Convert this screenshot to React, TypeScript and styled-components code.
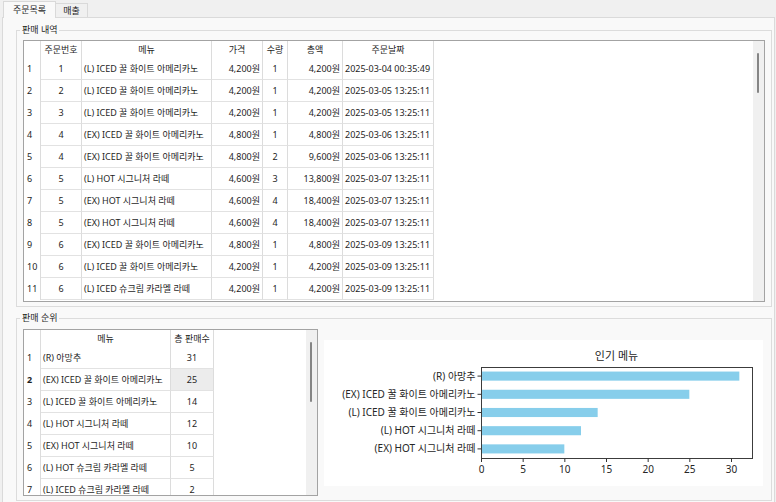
import React from "react";
import styled, { createGlobalStyle } from "styled-components";

const GlobalStyle = createGlobalStyle`
  html, body { margin: 0; padding: 0; background: #f0f0f0; }
  body {
    font-family: "Noto Sans", "Noto Sans CJK KR", sans-serif;
    color: #1e1e1e;
  }
  * { box-sizing: border-box; }
`;

const Window = styled.div`
  width: 776px;
  height: 502px;
  overflow: hidden;
  background: #f0f0f0;
  display: flex;
  flex-direction: column;
  font-size: 9px;
`;

const TabStrip = styled.div`
  height: 17px;
  flex: none;
  display: flex;
  align-items: flex-end;
  padding-left: 3px;
`;

const Tab = styled.div<{ $active?: boolean }>`
  position: relative;
  z-index: ${(p) => (p.$active ? 1 : 0)};
  height: ${(p) => (p.$active ? 17 : 14)}px;
  margin-bottom: ${(p) => (p.$active ? -1 : 0)}px;
  padding: 0 ${(p) => (p.$active ? 9 : 7)}px;
  display: flex;
  align-items: center;
  background: ${(p) => (p.$active ? "#f9f9f9" : "#f0f0f0")};
  border: 1px solid #d9d9d9;
  border-bottom: none;
  margin-left: ${(p) => (p.$active ? 0 : -1)}px;
  line-height: 12px;
  white-space: nowrap;
`;

const TabPage = styled.div`
  flex: 1;
  margin: 0 1px 0 2px;
  background: #f9f9f9;
  border: 1px solid #dadada;
  border-bottom: none;
  padding: 6px 2px 0 13px;
  display: flex;
  flex-direction: column;
  gap: 5px;
`;

const GroupBox = styled.fieldset<{ $height: number; $padTop: number }>`
  margin: 0;
  min-width: 0;
  height: ${(p) => p.$height}px;
  flex: none;
  border: 1px solid #dcdcdc;
  padding: ${(p) => p.$padTop}px 6px 4px 6px;
`;

const Legend = styled.legend`
  margin-left: -3px;
  padding: 0 2px;
  font-size: 9px;
  line-height: 12px;
  color: #1e1e1e;
`;

const GroupRow = styled.div`
  display: flex;
  align-items: center;
  gap: 6px;
`;

const GridFrame = styled.div<{ $width?: number; $height: number }>`
  flex: none;
  width: ${(p) => (p.$width ? `${p.$width}px` : "100%")};
  height: ${(p) => p.$height}px;
  display: flex;
  border: 1px solid #a3a3a3;
  background: #ffffff;
  overflow: hidden;
`;

const GridBody = styled.div`
  flex: 1;
  overflow: hidden;
`;

const ScrollTrack = styled.div`
  flex: none;
  width: 11px;
  background: #f0f0f0;
  padding: 12px 0 0 4px;
`;

const ScrollThumb = styled.div<{ $height: number }>`
  width: 2px;
  height: ${(p) => p.$height}px;
  background: #858585;
  border-radius: 1px;
`;

const GridRow = styled.div<{ $cols: string }>`
  display: grid;
  grid-template-columns: ${(p) => p.$cols};
`;

const HeadCell = styled.div`
  height: 17px;
  line-height: 17px;
  text-align: center;
  border-right: 1px solid #dcdcdc;
  white-space: nowrap;
  overflow: hidden;
  color: #1e1e1e;
`;

const RowHeader = styled.div<{ $bold?: boolean }>`
  height: 22px;
  line-height: 21px;
  padding-left: 3px;
  border-right: 1px solid #dcdcdc;
  font-weight: ${(p) => (p.$bold ? 700 : 400)};
  white-space: nowrap;
`;

const Cell = styled.div<{ $align?: "left" | "center" | "right"; $selected?: boolean }>`
  height: 22px;
  line-height: 21px;
  padding: 0 2px;
  text-align: ${(p) => p.$align || "left"};
  border-right: 1px solid #dcdcdc;
  border-bottom: 1px solid #e2e2e2;
  background: ${(p) => (p.$selected ? "#ececec" : "transparent")};
  white-space: nowrap;
  overflow: hidden;
`;

const ChartBox = styled.div`
  flex: none;
  width: 439px;
  height: 146px;
  background: #ffffff;
`;

type Align = "left" | "center" | "right";

const orderCols = "17px 41px 130px 51px 25px 55px 91px";
const orderHeads = ["주문번호", "메뉴", "가격", "수량", "총액", "주문날짜"];
const orderAligns: Align[] = ["center", "left", "right", "center", "right", "left"];
const orders: string[][] = [
  ["1", "(L) ICED 꿀 화이트 아메리카노", "4,200원", "1", "4,200원", "2025-03-04 00:35:49"],
  ["2", "(L) ICED 꿀 화이트 아메리카노", "4,200원", "1", "4,200원", "2025-03-05 13:25:11"],
  ["3", "(L) ICED 꿀 화이트 아메리카노", "4,200원", "1", "4,200원", "2025-03-05 13:25:11"],
  ["4", "(EX) ICED 꿀 화이트 아메리카노", "4,800원", "1", "4,800원", "2025-03-06 13:25:11"],
  ["4", "(EX) ICED 꿀 화이트 아메리카노", "4,800원", "2", "9,600원", "2025-03-06 13:25:11"],
  ["5", "(L) HOT 시그니처 라떼", "4,600원", "3", "13,800원", "2025-03-07 13:25:11"],
  ["5", "(EX) HOT 시그니처 라떼", "4,600원", "4", "18,400원", "2025-03-07 13:25:11"],
  ["5", "(EX) HOT 시그니처 라떼", "4,600원", "4", "18,400원", "2025-03-07 13:25:11"],
  ["6", "(EX) ICED 꿀 화이트 아메리카노", "4,800원", "1", "4,800원", "2025-03-09 13:25:11"],
  ["6", "(L) ICED 꿀 화이트 아메리카노", "4,200원", "1", "4,200원", "2025-03-09 13:25:11"],
  ["6", "(L) ICED 슈크림 카라멜 라떼", "4,200원", "1", "4,200원", "2025-03-09 13:25:11"],
];

const rankCols = "17px 130px 43px";
const ranks: [string, number][] = [
  ["(R) 아망추", 31],
  ["(EX) ICED 꿀 화이트 아메리카노", 25],
  ["(L) ICED 꿀 화이트 아메리카노", 14],
  ["(L) HOT 시그니처 라떼", 12],
  ["(EX) HOT 시그니처 라떼", 10],
  ["(L) HOT 슈크림 카라멜 라떼", 5],
  ["(L) ICED 슈크림 카라멜 라떼", 2],
];

const BarChart: React.FC = () => {
  const x0 = 157;
  const top = 27;
  const w = 271;
  const h = 91;
  const unit = 250 / 30;
  const step = h / 5;
  const data = ranks.slice(0, 5);
  const font = `"Noto Sans", "Noto Sans CJK KR", sans-serif`;
  return (
    <svg width="439" height="146" viewBox="0 0 439 146">
      <text x={292.5} y={20} textAnchor="middle" fontSize="11" fontFamily={font} fill="#1e1e1e">
        인기 메뉴
      </text>
      {data.map(([label, v], i) => {
        const c = top + step * (i + 0.5);
        return (
          <g key={label}>
            <rect x={x0} y={c - step / 4} width={v * unit} height={step / 2} fill="#87ceeb" />
            <line x1={x0 - 3.5} x2={x0} y1={c} y2={c} stroke="#333" strokeWidth="1" />
            <text x={151.5} y={c} dy="0.35em" textAnchor="end" fontSize="10" fontFamily={font} fill="#262626">
              {label}
            </text>
          </g>
        );
      })}
      <rect x={x0 + 0.5} y={top + 0.5} width={w} height={h} fill="none" stroke="#3c3c3c" strokeWidth="1" />
      {[0, 5, 10, 15, 20, 25, 30].map((t) => {
        const x = x0 + 0.5 + t * unit;
        return (
          <g key={t}>
            <line x1={x} x2={x} y1={top + h + 0.5} y2={top + h + 4} stroke="#333" strokeWidth="1" />
            <text x={x} y={133} textAnchor="middle" fontSize="10" fontFamily={font} fill="#262626">
              {t}
            </text>
          </g>
        );
      })}
    </svg>
  );
};

export default function App() {
  return (
    <>
      <GlobalStyle />
      <Window>
        <TabStrip>
          <Tab $active>주문목록</Tab>
          <Tab>매출</Tab>
        </TabStrip>
        <TabPage>
          <GroupBox $height={283} $padTop={4}>
            <Legend>판매 내역</Legend>
            <GridFrame $height={262}>
              <GridBody>
                <GridRow $cols={orderCols}>
                  <HeadCell />
                  {orderHeads.map((h) => (
                    <HeadCell key={h}>{h}</HeadCell>
                  ))}
                </GridRow>
                {orders.map((row, i) => (
                  <GridRow $cols={orderCols} key={i}>
                    <RowHeader>{i + 1}</RowHeader>
                    {row.map((v, j) => (
                      <Cell key={j} $align={orderAligns[j]}>
                        {v}
                      </Cell>
                    ))}
                  </GridRow>
                ))}
              </GridBody>
              <ScrollTrack>
                <ScrollThumb $height={40} />
              </ScrollTrack>
            </GridFrame>
          </GroupBox>
          <GroupBox $height={189} $padTop={5}>
            <Legend>판매 순위</Legend>
            <GroupRow>
              <GridFrame $width={295} $height={167}>
                <GridBody>
                  <GridRow $cols={rankCols}>
                    <HeadCell />
                    <HeadCell>메뉴</HeadCell>
                    <HeadCell>총 판매수</HeadCell>
                  </GridRow>
                  {ranks.map(([name, n], i) => (
                    <GridRow $cols={rankCols} key={name}>
                      <RowHeader $bold={i === 1}>{i + 1}</RowHeader>
                      <Cell>{name}</Cell>
                      <Cell $align="center" $selected={i === 1}>
                        {n}
                      </Cell>
                    </GridRow>
                  ))}
                </GridBody>
                <ScrollTrack>
                  <ScrollThumb $height={60} />
                </ScrollTrack>
              </GridFrame>
              <ChartBox>
                <BarChart />
              </ChartBox>
            </GroupRow>
          </GroupBox>
        </TabPage>
      </Window>
    </>
  );
}
